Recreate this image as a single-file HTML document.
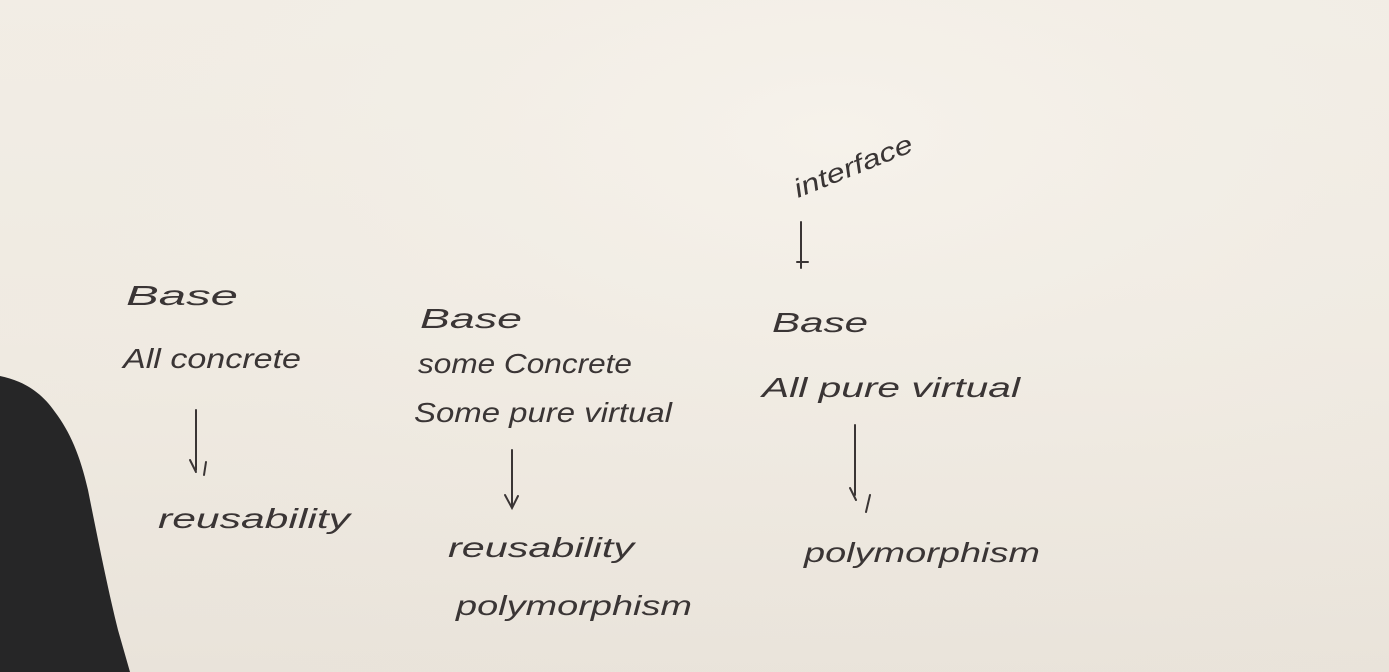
<!DOCTYPE html>
<html><head><meta charset="utf-8"><style>
html,body{margin:0;padding:0;}
body{width:1389px;height:672px;overflow:hidden;background:linear-gradient(180deg,#f3efe7 0%,#f0ebe2 50%,#e9e3da 100%);}
svg{display:block}
text{font-family:"Liberation Sans",sans-serif;font-style:italic;fill:#3a3535;}
</style></head><body>
<svg width="1389" height="672" viewBox="0 0 1389 672">
<defs><radialGradient id="g" cx="0.6" cy="0.2" r="0.9"><stop offset="0" stop-color="#f6f2eb"/><stop offset="1" stop-color="#ebe5dc" stop-opacity="0"/></radialGradient></defs>
<rect width="1389" height="672" fill="url(#g)"/>
<path d="M0,376 C20,380 40,390 55,412 C70,432 80,455 88,490 C98,540 108,590 118,630 L130,672 L0,672 Z" fill="#262627"/>
<g stroke="#3a3535" stroke-width="2" fill="none" stroke-linecap="round">
<path d="M196,410 L196,470 M190,460 L196,472 M206,462 L204,475"/>
<path d="M512,450 L512,505 M505,495 L512,508 L518,496"/>
<path d="M855,425 L855,495 M850,488 L856,500 M870,495 L866,512"/>
<path d="M801,222 L801,268 M797,262 L808,262"/>
</g>
<g font-size="28">
<text x="126" y="305" textLength="112" lengthAdjust="spacingAndGlyphs">Base</text>
<text x="123" y="368" textLength="178" lengthAdjust="spacingAndGlyphs">All concrete</text>
<text x="158" y="528" textLength="192" lengthAdjust="spacingAndGlyphs">reusability</text>
<text x="420" y="328" textLength="102" lengthAdjust="spacingAndGlyphs">Base</text>
<text x="418" y="373" textLength="214" lengthAdjust="spacingAndGlyphs">some Concrete</text>
<text x="414" y="422" textLength="258" lengthAdjust="spacingAndGlyphs">Some pure virtual</text>
<text x="448" y="557" textLength="186" lengthAdjust="spacingAndGlyphs">reusability</text>
<text x="456" y="615" textLength="236" lengthAdjust="spacingAndGlyphs">polymorphism</text>
<text x="772" y="332" textLength="96" lengthAdjust="spacingAndGlyphs">Base</text>
<text x="762" y="397" textLength="258" lengthAdjust="spacingAndGlyphs">All pure virtual</text>
<text x="804" y="562" textLength="236" lengthAdjust="spacingAndGlyphs">polymorphism</text>
<text x="0" y="0" font-size="26" transform="translate(798,198) rotate(-22)" textLength="126" lengthAdjust="spacingAndGlyphs">interface</text>
</g>
</svg>
</body></html>
